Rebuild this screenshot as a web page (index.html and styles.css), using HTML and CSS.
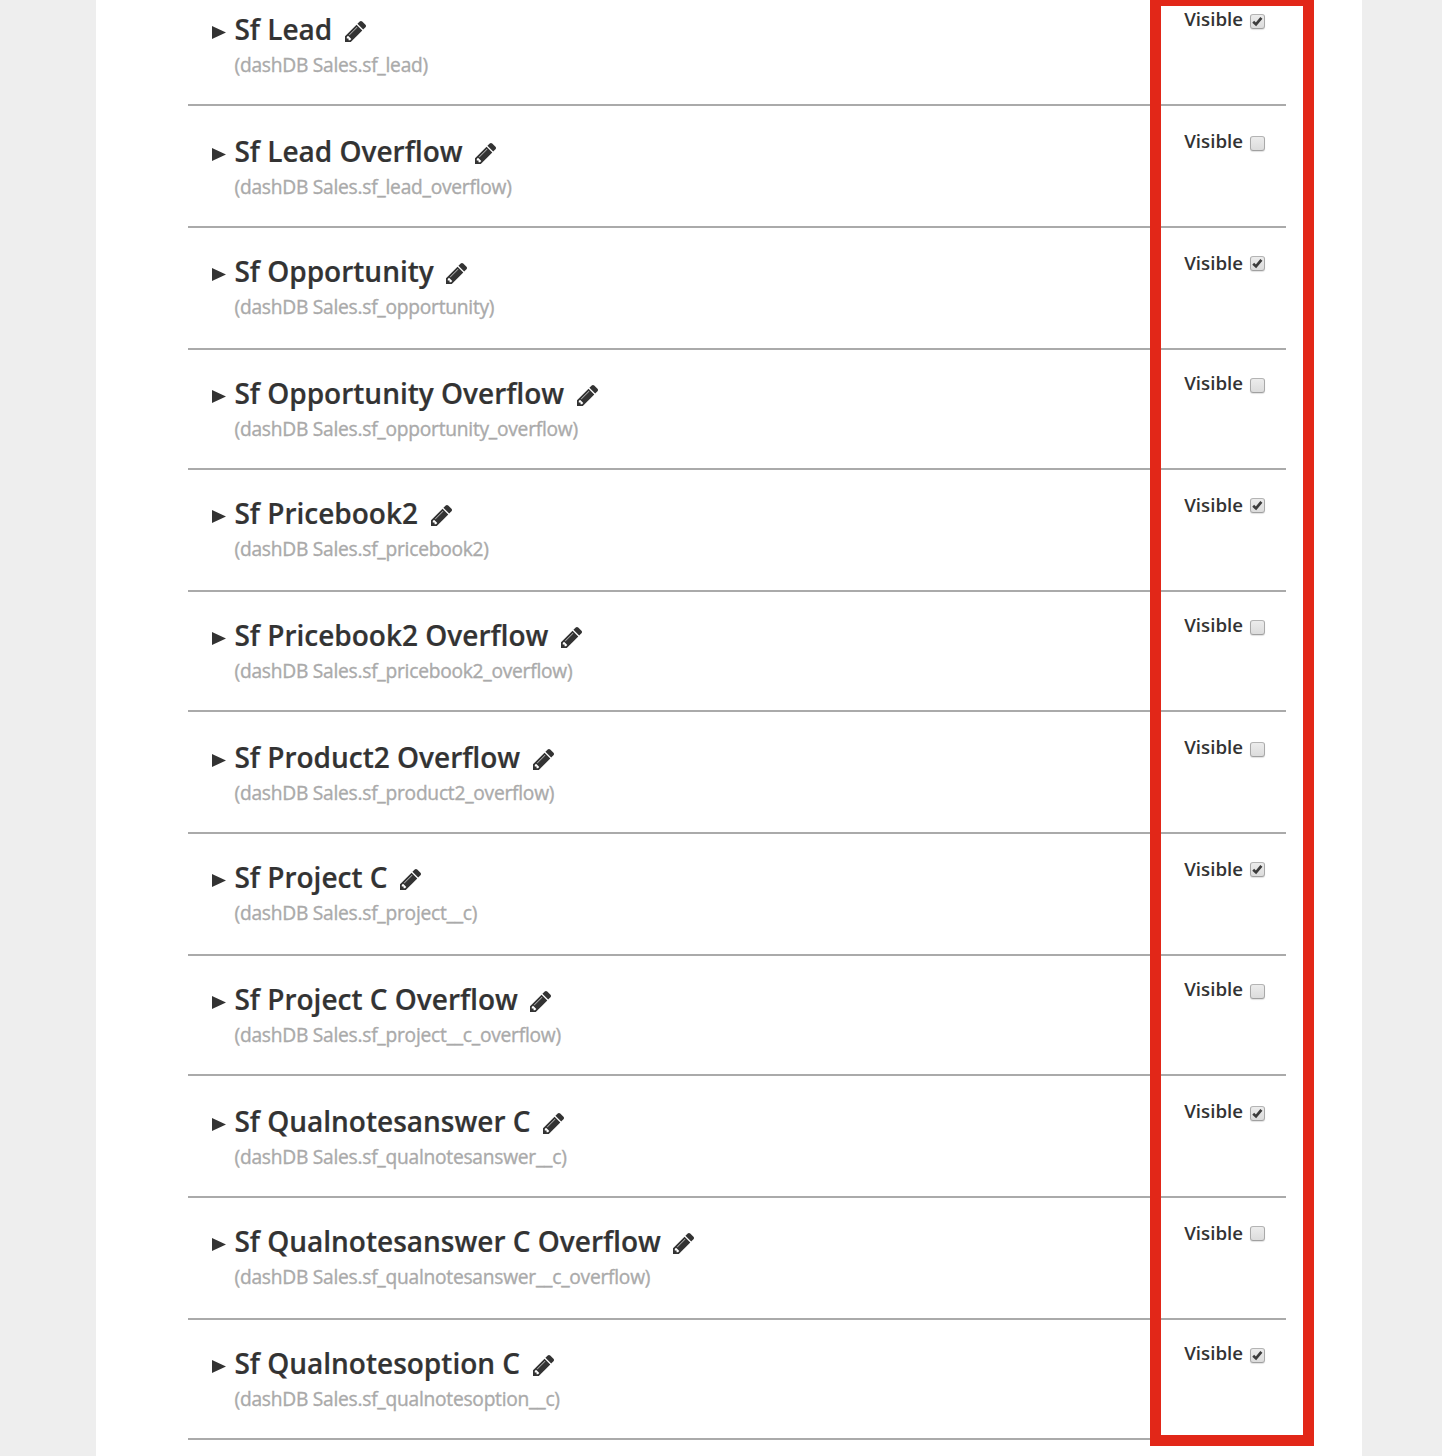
FILE: index.html
```html
<!DOCTYPE html>
<html lang="en">
<head>
<meta charset="utf-8">
<title>Tables</title>
<link rel="stylesheet" href="styles.css">
</head>
<body>
<svg width="0" height="0" class="defs">
<symbol id="pencil" viewBox="0 149 1515 1515"><path d="M363 1536l91-91-235-235-91 91v107h128v128h107zM886 608q0-22-22-22-10 0-17 7l-542 542q-7 7-7 17 0 22 22 22 10 0 17-7l542-542q7-7 7-17zM832 416l416 416-832 832h-416v-416zM1515 512q0 53-37 90l-166 166-416-416 166-165q36-38 90-38 53 0 91 38l235 234q37 39 37 91z"/></symbol>
<symbol id="caret" viewBox="0 0 14 13"><path d="M0 0L14 6.5L0 13z"/></symbol>
<symbol id="tick" viewBox="0 0 15 15"><path d="M3.2 7.8L6 10.4L11.4 3.8" fill="none" stroke="#3c3c3c" stroke-width="2.7"/></symbol>
</svg>
<main class="page">
<div class="list" id="list"></div>
<div class="highlight"></div>
</main>
<script src="tables.js"></script>
</body>
</html>
```
FILE: styles.css
```css
* { box-sizing: border-box; }
body { margin: 0; background: #eee; font-family: "Open Sans", sans-serif; color: #333; height: 1456px; overflow: hidden; }
.defs { display: block; }
.page { position: relative; margin: 0 80px 0 96px; padding: 0 76px 0 92px; height: 1456px; background: #fff; overflow: hidden; }
.list { margin-top: -16px; }
.row { display: flex; justify-content: space-between; align-items: flex-end; height: 122px; border-bottom: 2px solid #aaa; padding: 0 21px 0 24px; }
.row.short { height: 120px; }
.info { padding-bottom: 26px; }
.heading { display: flex; align-items: center; height: 38px; margin-bottom: 4px; }
.caret { width: 14px; height: 13px; margin: 7px 8.4px 0 0; fill: #333; }
.name { margin: 0; font-size: 28px; line-height: 38px; font-weight: 600; white-space: nowrap; -webkit-text-stroke: 0.2px #333; }
.pencil { width: 21px; height: 21px; margin: 4px 0 0 12.5px; fill: #333; }
.source { margin: 0 0 0 22.5px; font-size: 19.2px; letter-spacing: -0.25px; line-height: 26px; color: #aaa; white-space: nowrap; -webkit-text-stroke: 0.35px #aaa; }
.visible { display: flex; align-items: flex-start; height: 98px; font-size: 18.7px; line-height: 26px; font-weight: 600; }
.check { width: 15px; height: 15px; margin: 8px 0 0 7px; border: 1px solid #aaa; border-color: #b4b4b4 #a9a9a9 #a0a0a0; border-radius: 3px; background: linear-gradient(#ececec, #dcdcdc); box-shadow: 0 1px 1px rgba(0,0,0,.12); }
.check svg { display: block; width: 15px; height: 15px; margin: -1px; }
.raised .info { padding-bottom: 28px; }
.raised .check { margin-top: 6px; }
.highlight { position: absolute; left: 1054px; top: -5px; width: 164px; height: 1451px; border: 11px solid #e22718; }
```
FILE: tables.js
```js
const tables = [
  ["Sf Lead", "sf_lead", 1, ""],
  ["Sf Lead Overflow", "sf_lead_overflow", 0, ""],
  ["Sf Opportunity", "sf_opportunity", 1, "raised"],
  ["Sf Opportunity Overflow", "sf_opportunity_overflow", 0, "short"],
  ["Sf Pricebook2", "sf_pricebook2", 1, "raised"],
  ["Sf Pricebook2 Overflow", "sf_pricebook2_overflow", 0, "short"],
  ["Sf Product2 Overflow", "sf_product2_overflow", 0, ""],
  ["Sf Project C", "sf_project__c", 1, "raised"],
  ["Sf Project C Overflow", "sf_project__c_overflow", 0, "short"],
  ["Sf Qualnotesanswer C", "sf_qualnotesanswer__c", 1, ""],
  ["Sf Qualnotesanswer C Overflow", "sf_qualnotesanswer__c_overflow", 0, "raised"],
  ["Sf Qualnotesoption C", "sf_qualnotesoption__c", 1, "short"]
];
document.getElementById("list").innerHTML = tables.map(([name, source, on, cls]) => `
<section class="row ${cls}">
  <div class="info">
    <div class="heading"><svg class="caret"><use href="#caret"/></svg><h2 class="name">${name}</h2><svg class="pencil"><use href="#pencil"/></svg></div>
    <p class="source">(dashDB Sales.${source})</p>
  </div>
  <div class="visible">Visible<span class="check">${on ? '<svg><use href="#tick"/></svg>' : ""}</span></div>
</section>`).join("");
```
